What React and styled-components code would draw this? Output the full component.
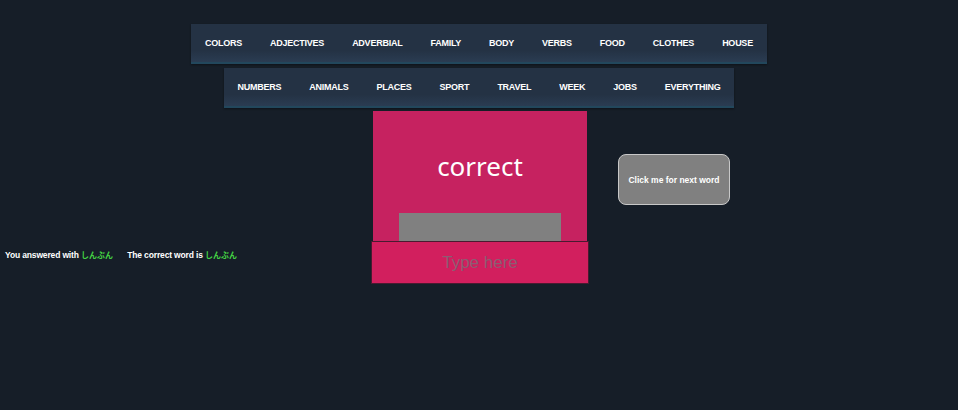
import React from 'react';
import styled, { createGlobalStyle } from 'styled-components';

const GlobalStyle = createGlobalStyle`
  html, body {
    margin: 0;
    padding: 0;
    background: #161e28;
    font-family: "Liberation Sans", Arial, sans-serif;
  }
`;

const Page = styled.div`
  width: 958px;
  height: 410px;
  padding-top: 24px;
  box-sizing: border-box;
`;

const NavBar = styled.nav`
  display: flex;
  width: fit-content;
  margin: 0 auto ${props => props.gap || 0}px;
  height: 40px;
  align-items: center;
  background: linear-gradient(to bottom, #243244 0%, #243244 70%, #2a3c52 100%);
  border-bottom: 2px solid #22475c;
  box-sizing: border-box;
  box-shadow: 0 1px 2px rgba(0, 0, 0, 0.4);
`;

const NavItem = styled.a`
  padding: 0 14px;
  color: #ffffff;
  font-size: 9px;
  font-weight: 700;
  letter-spacing: -0.25px;
  text-transform: uppercase;
  cursor: pointer;
  white-space: nowrap;
`;

const Game = styled.div`
  display: grid;
  grid-template-columns: 1fr 218px 1fr;
  margin-top: 3px;
  padding-left: 2px;
`;

const Feedback = styled.div`
  padding: 138px 0 0 3px;
  color: #ffffff;
  font-size: 8.5px;
  font-weight: 700;
  letter-spacing: -0.15px;
  white-space: nowrap;
`;

const Answer = styled.span`
  color: #43d143;
  font-family: "Noto Sans CJK JP", sans-serif;
  font-size: 8px;
  font-weight: 700;
  letter-spacing: 0;
  margin-right: ${props => props.spaced ? 12 : 0}px;
`;

const Centre = styled.div`
  display: flex;
  flex-direction: column;
  align-items: center;
`;

const Card = styled.div`
  width: 214px;
  height: 130px;
  background: #c62260;
  display: flex;
  flex-direction: column;
  align-items: center;
`;

const Word = styled.h2`
  margin: 39px 0 0;
  color: #ffffff;
  font-family: "Noto Sans", sans-serif;
  font-weight: 400;
  font-size: 26px;
  line-height: 32px;
`;

const Hint = styled.div`
  margin-top: auto;
  width: 162px;
  height: 28px;
  background: #808080;
`;

const Input = styled.input`
  width: 218px;
  height: 43px;
  box-sizing: border-box;
  background: #d21f5e;
  border: 1px solid #4a1a30;
  color: #ffffff;
  font-family: "Liberation Sans", Arial, sans-serif;
  font-size: 17px;
  text-align: center;
  outline: none;
  &::placeholder {
    color: #8c5d72;
  }
`;

const Side = styled.div`
  padding: 43px 0 0 29px;
`;

const NextButton = styled.button`
  width: 112px;
  height: 51px;
  background: #808080;
  border: 1px solid #c8c8c8;
  border-radius: 8px;
  color: #ffffff;
  font-family: "Liberation Sans", Arial, sans-serif;
  font-size: 8.5px;
  font-weight: 700;
  cursor: pointer;
`;

const topics = ['Colors', 'Adjectives', 'Adverbial', 'Family', 'Body', 'Verbs', 'Food', 'Clothes', 'House'];
const moreTopics = ['Numbers', 'Animals', 'Places', 'Sport', 'Travel', 'Week', 'Jobs', 'Everything'];

export default function App() {
  return (
    <Page>
      <GlobalStyle />
      <NavBar gap={4}>
        {topics.map(t => <NavItem key={t}>{t}</NavItem>)}
      </NavBar>
      <NavBar>
        {moreTopics.map(t => <NavItem key={t}>{t}</NavItem>)}
      </NavBar>
      <Game>
        <Feedback>
          You answered with <Answer spaced>しんぶん</Answer> The correct word is <Answer>しんぶん</Answer>
        </Feedback>
        <Centre>
          <Card>
            <Word>correct</Word>
            <Hint />
          </Card>
          <Input placeholder="Type here" />
        </Centre>
        <Side>
          <NextButton>Click me for next word</NextButton>
        </Side>
      </Game>
    </Page>
  );
}
